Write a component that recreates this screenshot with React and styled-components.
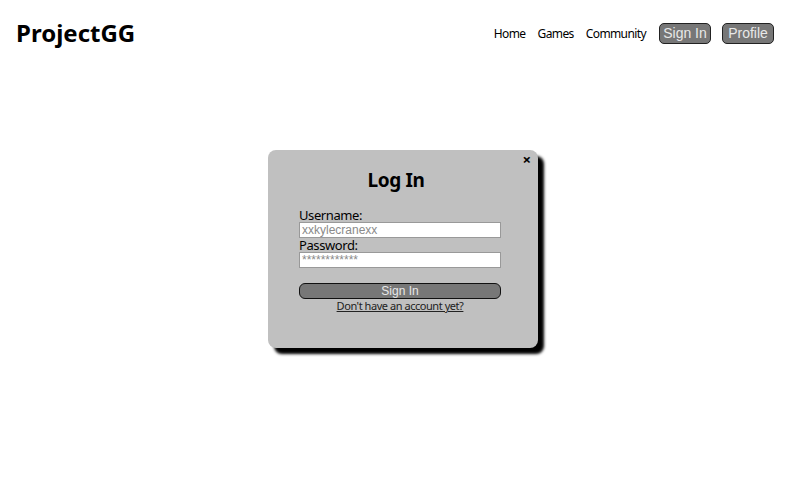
import React from "react";
import styled, { createGlobalStyle } from "styled-components";

const Global = createGlobalStyle`
  html, body { margin: 0; padding: 0; background: #fff; }
  body { font-family: "Noto Sans", "DejaVu Sans", sans-serif; color: #000; }
`;

const Page = styled.div`
  width: 806px;
  height: 497px;
  display: flex;
  flex-direction: column;
`;

const Header = styled.header`
  display: flex;
  align-items: center;
  justify-content: space-between;
  padding: 17px 32px 0 16px;
  height: 32px;
`;

const Logo = styled.h1`
  margin: 0;
  font-size: 24px;
  line-height: 32px;
  font-weight: bold;
`;

const Nav = styled.nav`
  display: flex;
  align-items: center;
  gap: 12px;
`;

const NavLink = styled.a`
  font-size: 12px;
  letter-spacing: -0.6px;
  color: #000;
  text-decoration: none;
`;

const NavButton = styled.button`
  font-family: "Liberation Sans", Arial, sans-serif;
  font-size: 14px;
  color: #e8e8e8;
  background: #777;
  border: 1px solid #222;
  border-radius: 5px;
  height: 21px;
  width: 52px;
  padding: 0;
  margin-left: ${(p) => (p.$first ? "1px" : "-1px")};
`;

const Main = styled.main`
  flex: 1;
  display: flex;
  justify-content: center;
  padding-top: 101px;
`;

const Modal = styled.div`
  position: relative;
  width: 270px;
  height: 198px;
  background: #c0c0c0;
  border-radius: 8px;
  box-shadow: 6px 6px 3px #000;
  display: flex;
  flex-direction: column;
  align-items: center;
  box-sizing: border-box;
  padding-top: 17px;
`;

const Close = styled.span`
  position: absolute;
  top: -1px;
  right: 7px;
  font-size: 15px;
  font-weight: bold;
`;

const Title = styled.h2`
  margin: 0 14px 0 0;
  font-size: 19px;
  letter-spacing: -0.4px;
  line-height: 26px;
  font-weight: bold;
`;

const Form = styled.form`
  width: 202px;
  margin: 15px 6px 0 0;
  display: flex;
  flex-direction: column;
`;

const Label = styled.label`
  font-size: 13px;
  letter-spacing: -0.4px;
  line-height: 14px;
`;

const Input = styled.input`
  box-sizing: border-box;
  width: 202px;
  height: 16px;
  margin: 0;
  padding: 0 2px;
  border: 1px solid #999;
  background: #fff;
  font-family: "Liberation Sans", Arial, sans-serif;
  font-size: 12px;
  color: #888;
  &::placeholder { color: #8a8a8a; opacity: 1; }
`;

const Gap = styled.div`
  height: ${(p) => p.$h}px;
`;

const Submit = styled.button`
  box-sizing: border-box;
  width: 202px;
  height: 16px;
  padding: 0;
  background: #777;
  color: #e8e8e8;
  border: 1px solid #111;
  border-radius: 6px;
  font-family: "Liberation Sans", Arial, sans-serif;
  font-size: 12px;
`;

const Register = styled.a`
  text-align: center;
  font-size: 11px;
  letter-spacing: -0.45px;
  line-height: 13px;
  color: #222;
  text-decoration: underline;
`;

export default function App() {
  return (
    <>
      <Global />
      <Page>
        <Header>
          <Logo>ProjectGG</Logo>
          <Nav>
            <NavLink>Home</NavLink>
            <NavLink>Games</NavLink>
            <NavLink>Community</NavLink>
            <NavButton $first>Sign In</NavButton>
            <NavButton>Profile</NavButton>
          </Nav>
        </Header>
        <Main>
          <Modal>
            <Close>×</Close>
            <Title>Log In</Title>
            <Form>
              <Label>Username:</Label>
              <Input placeholder="xxkylecranexx" />
              <Label>Password:</Label>
              <Input type="password" placeholder="************" />
              <Gap $h={15} />
              <Submit type="button">Sign In</Submit>
              <Register>Don't have an account yet?</Register>
            </Form>
          </Modal>
        </Main>
      </Page>
    </>
  );
}
